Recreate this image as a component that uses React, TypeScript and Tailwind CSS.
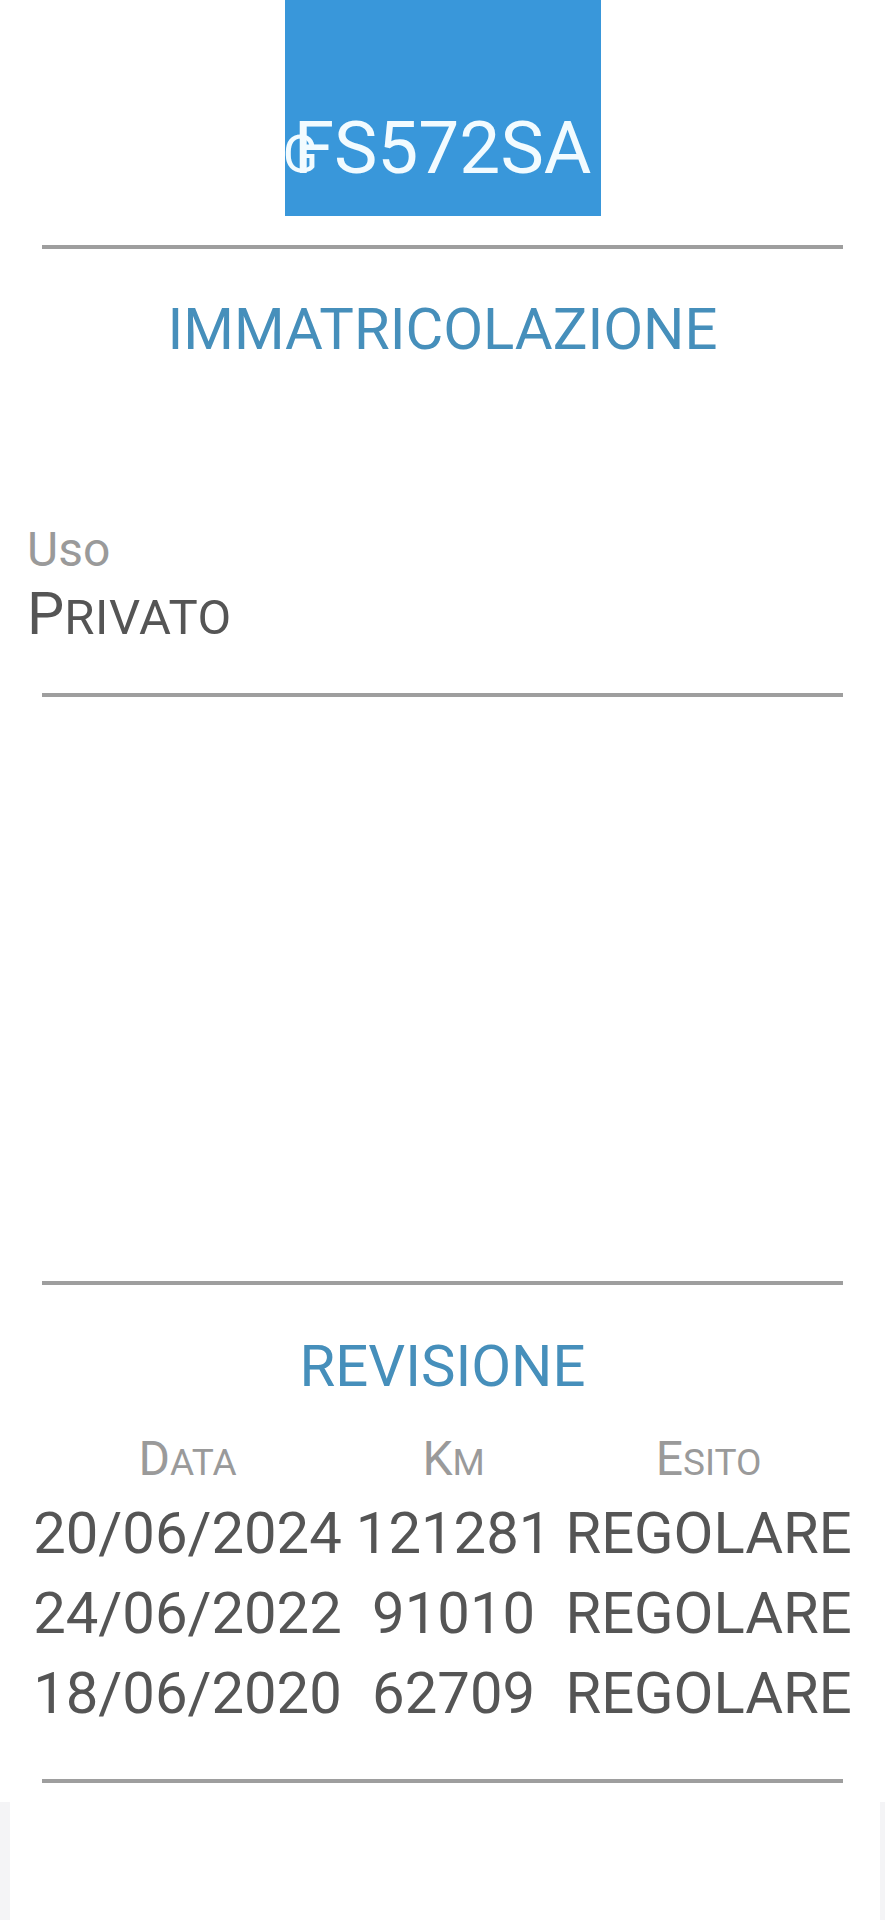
import React from "react";

function SC({ first, rest, big, small }: { first: string; rest: string; big: string; small: string }) {
  return (
    <span>
      <span className={big}>{first}</span>
      <span className={small}>{rest}</span>
    </span>
  );
}

const rows = [
  ["20/06/2024", "121281", "REGOLARE"],
  ["24/06/2022", "91010", "REGOLARE"],
  ["18/06/2020", "62709", "REGOLARE"],
];

export default function App() {
  return (
    <div className="w-[885px] min-h-[1920px] bg-white flex flex-col" style={{ fontFamily: "Roboto, 'Noto Sans', sans-serif" }}>
      {/* Plate */}
      <div className="flex justify-center">
        <div className="w-[316px] h-[216px] bg-[#3997da] flex items-end justify-center pb-[31px]">
          <span className="relative text-[73px] leading-none text-[#f2fbff] font-normal">
            <span className="absolute left-[-11px] bottom-[4px] text-[52px] leading-none">G</span>
            FS572SA
          </span>
        </div>
      </div>

      <div className="mt-[29px] mx-[42px] h-[4px] bg-[#9e9e9e]" />

      <div className="mt-[51px] text-center text-[58px] leading-none text-[#468fbb]">IMMATRICOLAZIONE</div>

      <div className="mt-[168px] pl-[27px] text-[48px] leading-none text-[#9a9a9a]">Uso</div>
      <div className="mt-[10px] pl-[27px] text-[59px] leading-none text-[#555555]">
        <SC first="P" rest="RIVATO" big="text-[59px]" small="text-[49px] tracking-[0.6px]" />
      </div>

      <div className="mt-[50px] mx-[42px] h-[4px] bg-[#9e9e9e]" />

      <div className="mt-[584px] mx-[42px] h-[4px] bg-[#9e9e9e]" />

      <div className="mt-[52px] text-center text-[58px] leading-none text-[#468fbb]">REVISIONE</div>

      <div className="mt-[40px] flex justify-center">
        <table className="border-separate border-spacing-0">
          <thead>
            <tr className="text-[48px] leading-none text-[#9a9a9a] font-normal">
              <th className="px-[7px] pb-[10px] font-normal text-center">
                <SC first="D" rest="ATA" big="text-[48px]" small="text-[37px]" />
              </th>
              <th className="px-[7px] pb-[10px] font-normal text-center">
                <SC first="K" rest="M" big="text-[48px]" small="text-[37px]" />
              </th>
              <th className="px-[7px] pb-[10px] font-normal text-center">
                <SC first="E" rest="SITO" big="text-[48px]" small="text-[37px]" />
              </th>
            </tr>
          </thead>
          <tbody>
            {rows.map((r, i) => (
              <tr key={i} className="text-[58px] leading-[80px] text-[#555555]">
                {r.map((c, j) => (
                  <td key={j} className="px-[7px] text-center whitespace-nowrap">
                    {c}
                  </td>
                ))}
              </tr>
            ))}
          </tbody>
        </table>
      </div>

      <div className="mt-[46px] mx-[42px] h-[4px] bg-[#9e9e9e]" />

      <div className="mt-[19px] flex-1 bg-[#f4f4f6] pl-[10px] pr-[5px] flex">
        <div className="flex-1 bg-white" />
      </div>
    </div>
  );
}
